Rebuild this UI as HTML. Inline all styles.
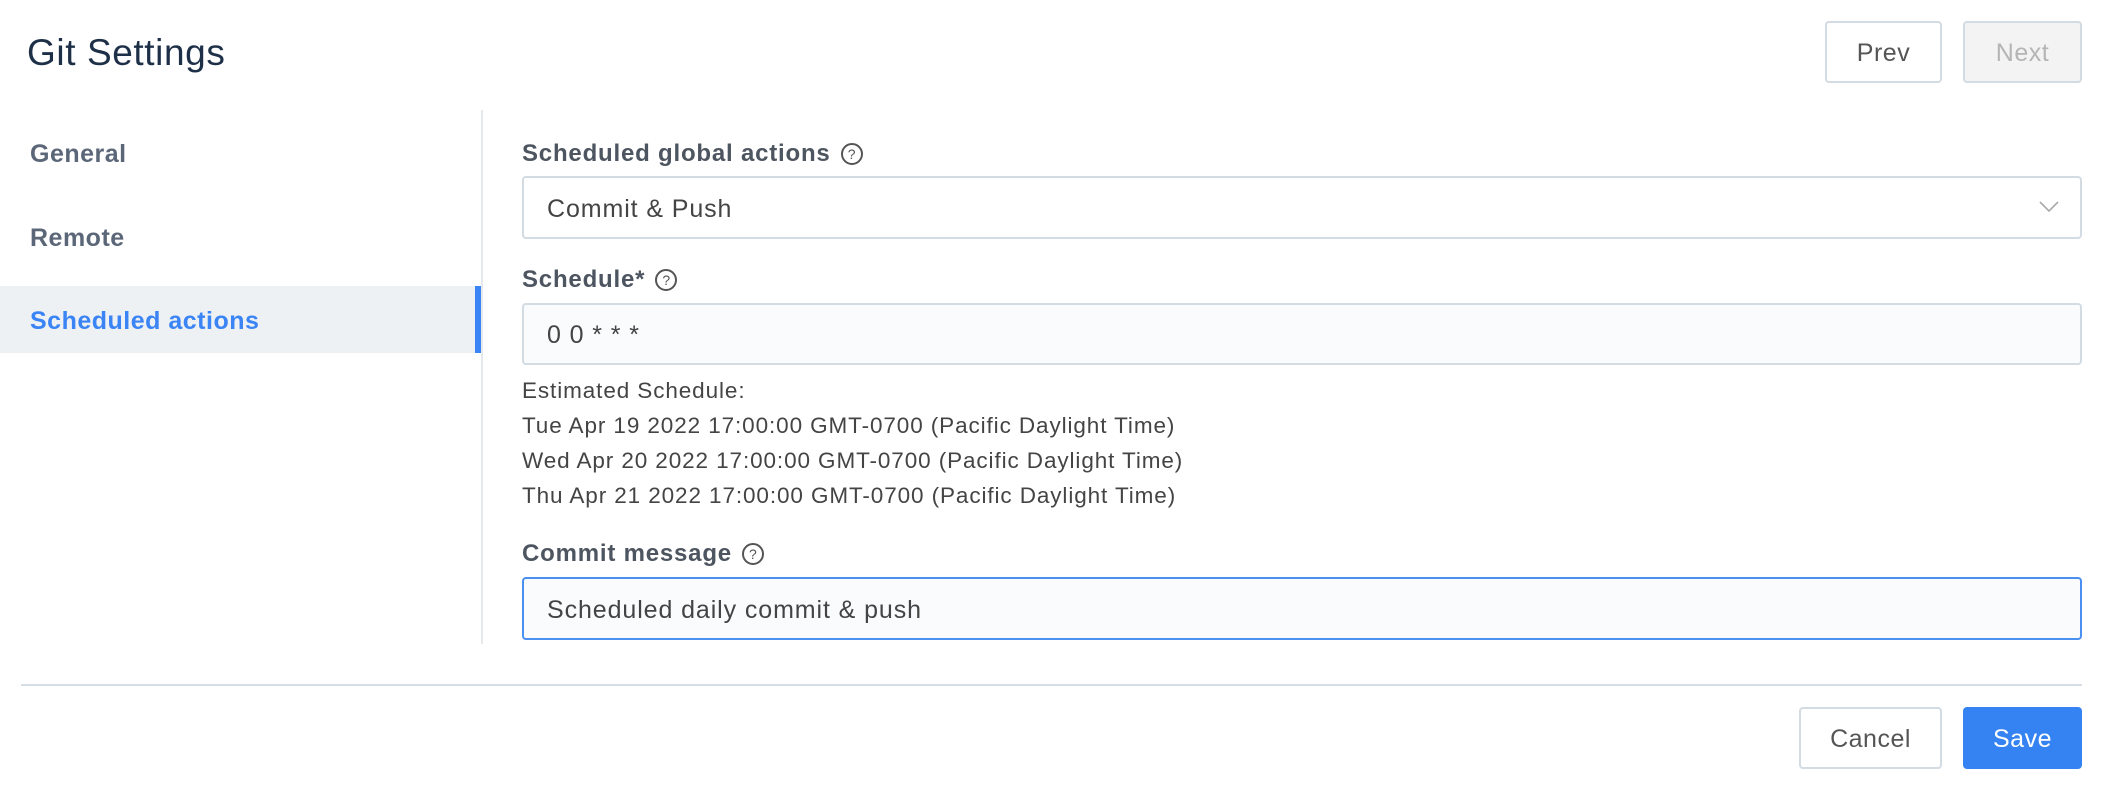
<!DOCTYPE html>
<html><head><meta charset="utf-8"><style>
*{box-sizing:border-box;margin:0;padding:0}
body{width:2104px;height:792px;background:#fff;font-family:"Liberation Sans",sans-serif;position:relative;overflow:hidden;color:#444}
.a{position:absolute}
.title{left:27px;top:32px;font-size:37px;color:#1e3048;letter-spacing:.6px}
.btn{position:absolute;border:2px solid #d3dbe3;border-radius:4px;background:#fff;font-size:25px;color:#555;display:flex;align-items:center;justify-content:center;padding-top:3px;letter-spacing:.5px}
.nav{left:30px;font-size:25px;font-weight:bold;color:#5b6778;letter-spacing:.5px}
.lbl{left:522px;font-size:24px;font-weight:bold;color:#4d5560;display:flex;align-items:center;letter-spacing:.8px}
.q{display:inline-block;width:22px;height:22px;border:2px solid #555;border-radius:50%;font-size:14px;font-weight:normal;text-align:center;line-height:18px;margin-left:10px;color:#555;letter-spacing:0}
.inp{position:absolute;left:522px;width:1560px;border:2px solid #d3dbe3;border-radius:4px;background:#fafbfc;font-size:25px;color:#444;padding-left:23px;padding-top:3px;display:flex;align-items:center;letter-spacing:.9px}
.est{left:522px;font-size:22.5px;color:#444;line-height:35px;letter-spacing:.9px}
</style></head><body>
<div class="a title">Git Settings</div>
<div class="btn" style="left:1825px;top:21px;width:117px;height:62px">Prev</div>
<div class="btn" style="left:1963px;top:21px;width:119px;height:62px;background:#f3f3f3;color:#b5b5b5">Next</div>

<div class="a" style="left:481px;top:110px;width:2px;height:534px;background:#e6e9ec"></div>
<div class="a nav" style="top:140px">General</div>
<div class="a nav" style="top:224px">Remote</div>
<div class="a" style="left:0;top:286px;width:481px;height:67px;background:#edf1f4"></div>
<div class="a" style="left:475px;top:286px;width:6px;height:67px;background:#3a84f5"></div>
<div class="a nav" style="top:307px;color:#3a84f5">Scheduled actions</div>

<div class="a lbl" style="top:140px">Scheduled global actions<span class="q">?</span></div>
<div class="inp" style="top:176px;height:63px;background:#fff">Commit &amp; Push
<svg class="a" style="left:1514px;top:22px" width="22" height="14" viewBox="0 0 22 14"><path d="M2 2 L11 11 L20 2" fill="none" stroke="#aaa" stroke-width="1.6"/></svg></div>

<div class="a lbl" style="top:266px">Schedule*<span class="q">?</span></div>
<div class="inp" style="top:303px;height:62px">0 0 * * *</div>

<div class="a est" style="top:373px">Estimated Schedule:<br>Tue Apr 19 2022 17:00:00 GMT-0700 (Pacific Daylight Time)<br>Wed Apr 20 2022 17:00:00 GMT-0700 (Pacific Daylight Time)<br>Thu Apr 21 2022 17:00:00 GMT-0700 (Pacific Daylight Time)</div>

<div class="a lbl" style="top:540px">Commit message<span class="q">?</span></div>
<div class="inp" style="top:577px;height:63px;border-color:#4a90f0">Scheduled daily commit &amp; push</div>

<div class="a" style="left:21px;top:684px;width:2061px;height:2px;background:#d6dde4"></div>
<div class="btn" style="left:1799px;top:707px;width:143px;height:62px">Cancel</div>
<div class="btn" style="left:1963px;top:707px;width:119px;height:62px;background:#3583f3;border-color:#3583f3;color:#fff">Save</div>
</body></html>
